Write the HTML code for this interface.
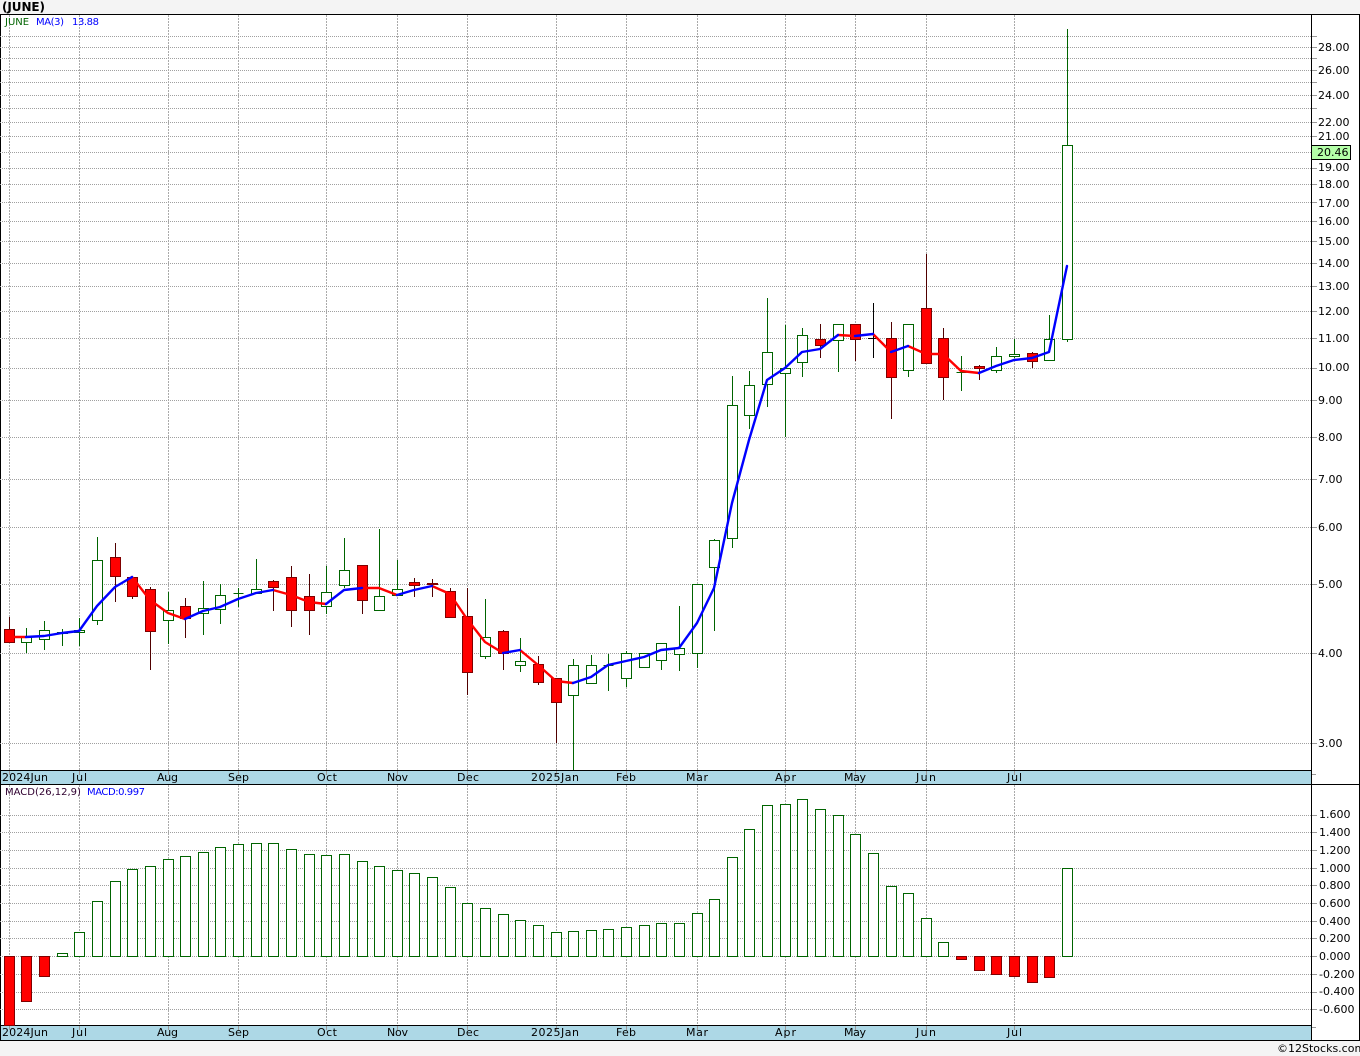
<!DOCTYPE html>
<html><head><meta charset="utf-8"><title>JUNE</title>
<style>
html,body{margin:0;padding:0;background:#f4f4f4;width:1360px;height:1056px;overflow:hidden}
svg{display:block}
text{font-family:"DejaVu Sans","Liberation Sans",sans-serif;font-size:11px;fill:#000}
.s{font-size:10px}
</style></head><body>
<svg width="1360" height="1056" viewBox="0 0 1360 1056" xmlns="http://www.w3.org/2000/svg">
<rect width="1360" height="1056" fill="#f4f4f4"/>
<rect x="0" y="14" width="1360" height="1026" fill="#fff"/>
<rect x="0" y="770" width="1311" height="14" fill="#add8e6"/>
<rect x="0" y="1025" width="1311" height="15" fill="#add8e6"/>
<g shape-rendering="crispEdges" fill="none">
<path stroke="#000" d="M0 14.5H1360M0.5 14V1040M1311.5 14V1040M1359.5 14V1040M0 770.5H1311M0 784.5H1360M0 1025.5H1311M0 1040.5H1360"/>
<g stroke="#a0a0a0" stroke-dasharray="1 1">
<path d="M0 36.5H1311M0 47.5H1311M0 58.5H1311M0 70.5H1311M0 82.5H1311M0 95.5H1311M0 108.5H1311M0 122.5H1311M0 136.5H1311M0 152.5H1311M0 168.5H1311M0 184.5H1311M0 202.5H1311M0 221.5H1311M0 241.5H1311M0 263.5H1311M0 286.5H1311M0 311.5H1311M0 338.5H1311M0 368.5H1311M0 400.5H1311M0 437.5H1311M0 479.5H1311M0 527.5H1311M0 584.5H1311M0 653.5H1311M0 743.5H1311"/>
<path d="M0 815.5H1311M0 832.5H1311M0 850.5H1311M0 868.5H1311M0 885.5H1311M0 903.5H1311M0 921.5H1311M0 938.5H1311M0 956.5H1311M0 974.5H1311M0 992.5H1311M0 1009.5H1311"/>
</g>
<g stroke="#aaaaaa" stroke-dasharray="2 1">
<path d="M9.5 15V770M79.5 15V770M168.5 15V770M238.5 15V770M326.5 15V770M397.5 15V770M467.5 15V770M556.5 15V770M626.5 15V770M697.5 15V770M785.5 15V770M855.5 15V770M926.5 15V770M1014.5 15V770"/>
<path d="M9.5 785V1025M79.5 785V1025M168.5 785V1025M238.5 785V1025M326.5 785V1025M397.5 785V1025M467.5 785V1025M556.5 785V1025M626.5 785V1025M697.5 785V1025M785.5 785V1025M855.5 785V1025M926.5 785V1025M1014.5 785V1025"/>
</g>
<path stroke="#999" d="M1312 36.5h5M1312 47.5h5M1312 58.5h5M1312 70.5h5M1312 82.5h5M1312 95.5h5M1312 108.5h5M1312 122.5h5M1312 136.5h5M1312 168.5h5M1312 184.5h5M1312 202.5h5M1312 221.5h5M1312 241.5h5M1312 263.5h5M1312 286.5h5M1312 311.5h5M1312 338.5h5M1312 368.5h5M1312 400.5h5M1312 437.5h5M1312 479.5h5M1312 527.5h5M1312 584.5h5M1312 653.5h5M1312 743.5h5M1312 774.5h4M1312 815.5h5M1312 832.5h5M1312 850.5h5M1312 868.5h5M1312 885.5h5M1312 903.5h5M1312 921.5h5M1312 938.5h5M1312 956.5h5M1312 974.5h5M1312 992.5h5M1312 1009.5h5M1312 1027.5h4M9.5 771v4M79.5 771v4M168.5 771v4M238.5 771v4M326.5 771v4M397.5 771v4M467.5 771v4M556.5 771v4M626.5 771v4M697.5 771v4M785.5 771v4M855.5 771v4M926.5 771v4M1014.5 771v4M9.5 1026v4M79.5 1026v4M168.5 1026v4M238.5 1026v4M326.5 1026v4M397.5 1026v4M467.5 1026v4M556.5 1026v4M626.5 1026v4M697.5 1026v4M785.5 1026v4M855.5 1026v4M926.5 1026v4M1014.5 1026v4"/>

<!-- green wicks -->
<path stroke="#006400" d="M26.5 628V653M44.5 621V650M62.5 629V646M79.5 618V646M97.5 537V625M168.5 592V644M203.5 581V635M220.5 584V624M238.5 588V607M256.5 559V593M326.5 566V614M344.5 538V588M379.5 529V596M397.5 560V589M485.5 599V659M520.5 638V672M573.5 659V770M591.5 655V665M608.5 654V691M626.5 651V687M644.5 653V667M661.5 643V670M679.5 606V671M697.5 584V668M714.5 539V631M732.5 376V548M749.5 371V429M767.5 298V407M785.5 325V437M802.5 328V377M838.5 324V372M908.5 324V377M961.5 356V391M996.5 347V373M1014.5 339V358M1049.5 315V360M1067.5 29V342"/>
<!-- red wicks -->
<path stroke="#500000" d="M9.5 617V642M115.5 543V602M132.5 577V599M150.5 587V670M185.5 598V638M273.5 580V611M291.5 566V627M309.5 574V635M362.5 565V614M414.5 578V597M432.5 579V597M450.5 588V617M467.5 588V695M503.5 630V670M538.5 656V685M556.5 678V743M820.5 324V358M855.5 324V361M891.5 322V419M926.5 254V364M943.5 328V400M979.5 365V380M1032.5 352V368"/>
<!-- doji black -->
<path stroke="#000" d="M873.5 303V358M868 338.5h10"/>
<!-- green bodies -->
<path stroke="#006400" fill="#fff" d="M21.500 637.500h10v5h-10zM39.500 630.500h10v9h-10zM57.500 632.500h10v1h-10zM74.500 630.500h10v2h-10zM92.500 560.500h10v60h-10zM163.500 610.500h10v10h-10zM198.500 608.500h10v5h-10zM215.500 595.500h10v14h-10zM233.500 593.500h10zM251.500 589.500h10v4h-10zM321.500 592.500h10v14h-10zM339.500 570.500h10v15h-10zM374.500 596.500h10v14h-10zM392.500 589.500h10v6h-10zM480.500 637.500h10v19h-10zM515.500 661.500h10v4h-10zM568.500 665.500h10v30h-10zM586.500 665.500h10v18h-10zM603.500 665.500h10zM621.500 653.500h10v25h-10zM639.500 653.500h10v14h-10zM656.500 643.500h10v17h-10zM674.500 648.500h10v6h-10zM692.500 584.500h10v69h-10zM709.500 540.500h10v27h-10zM727.500 405.500h10v133h-10zM744.500 385.500h10v30h-10zM762.500 352.500h10v32h-10zM780.500 368.500h10v5h-10zM797.500 335.500h10v27h-10zM833.500 324.500h10v16h-10zM903.500 324.500h10v46h-10zM956.500 372.500h10zM991.500 356.500h10v14h-10zM1009.500 354.500h10v2h-10zM1044.500 339.500h10v21h-10zM1062.500 145.500h10v194h-10z"/>
<!-- red bodies -->
<path stroke="#800000" fill="#f00" d="M4.500 629.500h10v13h-10zM110.500 557.500h10v19h-10zM127.500 577.500h10v19h-10zM145.500 589.500h10v42h-10zM180.500 606.500h10v12h-10zM268.500 581.500h10v6h-10zM286.500 577.500h10v33h-10zM304.500 596.500h10v14h-10zM357.500 565.500h10v35h-10zM409.500 582.500h10v3h-10zM427.500 583.500h10v1h-10zM445.500 591.500h10v26h-10zM462.500 616.500h10v56h-10zM498.500 631.500h10v22h-10zM533.500 664.500h10v18h-10zM551.500 678.500h10v24h-10zM815.500 339.500h10v6h-10zM850.500 324.500h10v15h-10zM886.500 338.500h10v39h-10zM921.500 308.500h10v55h-10zM938.500 338.500h10v39h-10zM974.500 366.500h10v2h-10zM1027.500 353.500h10v8h-10z"/>
<!-- MACD green bars -->
<path stroke="#006400" fill="#fff" d="M57.500 953.500h10v3h-10zM74.500 932.500h10v24h-10zM92.500 901.500h10v55h-10zM110.500 881.500h10v75h-10zM127.500 869.500h10v87h-10zM145.500 866.500h10v90h-10zM163.500 859.500h10v97h-10zM180.500 856.500h10v100h-10zM198.500 852.500h10v104h-10zM215.500 847.500h10v109h-10zM233.500 844.500h10v112h-10zM251.500 843.500h10v113h-10zM268.500 843.500h10v113h-10zM286.500 849.500h10v107h-10zM304.500 854.500h10v102h-10zM321.500 855.500h10v101h-10zM339.500 854.500h10v102h-10zM357.500 861.500h10v95h-10zM374.500 866.500h10v90h-10zM392.500 870.500h10v86h-10zM409.500 873.500h10v83h-10zM427.500 877.500h10v79h-10zM445.500 887.500h10v69h-10zM462.500 903.500h10v53h-10zM480.500 908.500h10v48h-10zM498.500 914.500h10v42h-10zM515.500 920.500h10v36h-10zM533.500 925.500h10v31h-10zM551.500 932.500h10v24h-10zM568.500 931.500h10v25h-10zM586.500 930.500h10v26h-10zM603.500 929.500h10v27h-10zM621.500 927.500h10v29h-10zM639.500 925.500h10v31h-10zM656.500 923.500h10v33h-10zM674.500 923.500h10v33h-10zM692.500 913.500h10v43h-10zM709.500 899.500h10v57h-10zM727.500 857.500h10v99h-10zM744.500 829.500h10v127h-10zM762.500 805.500h10v151h-10zM780.500 804.500h10v152h-10zM797.500 799.500h10v157h-10zM815.500 809.500h10v147h-10zM833.500 815.500h10v141h-10zM850.500 834.500h10v122h-10zM868.500 853.500h10v103h-10zM886.500 886.500h10v70h-10zM903.500 893.500h10v63h-10zM921.500 918.500h10v38h-10zM938.500 942.500h10v14h-10zM1062.500 868.500h10v88h-10z"/>
<!-- MACD red bars -->
<path stroke="#800000" fill="#f00" d="M4.500 956.500h10v69h-10zM21.500 956.500h10v45h-10zM39.500 956.500h10v20h-10zM956.500 956.500h10v3h-10zM974.500 956.500h10v14h-10zM991.500 956.500h10v18h-10zM1009.500 956.500h10v20h-10zM1027.500 956.500h10v26h-10zM1044.500 956.500h10v21h-10z"/>
<rect x="1311.500" y="145.500" width="39" height="14" fill="#b4ffa8" stroke="#000"/>
</g>
<!-- MA line -->
<g fill="none" stroke-width="2.4" stroke-linejoin="round" stroke-linecap="round">
<g stroke="#ff0000">
<polyline points="9,637 26,637"/>
<polyline points="132,577 150,600 168,613 185,619"/>
<polyline points="273,590 291,595 309,602 326,604"/>
<polyline points="362,588 379,588 397,595"/>
<polyline points="432,586 450,594 467,619 485,642 503,653"/>
<polyline points="520,650 538,665 556,681 573,683"/>
<polyline points="838,335 855,336"/>
<polyline points="873,334 891,352"/>
<polyline points="908,346 926,354 943,354 961,371 979,373"/>
</g>
<g stroke="#0000ff">
<polyline points="26,637 44,636 62,633 79,631 97,606 115,587 132,577"/>
<polyline points="185,619 203,611 220,607 238,599 256,593 273,590"/>
<polyline points="326,604 344,590 362,588"/>
<polyline points="397,595 414,590 432,586"/>
<polyline points="503,653 520,650"/>
<polyline points="573,683 591,677 608,665 626,661 644,657 661,650 679,648 697,623 714,588 732,503 749,440 767,380 785,368 802,352 820,349 838,335"/>
<polyline points="855,336 873,334"/>
<polyline points="891,352 908,346"/>
<polyline points="979,373 996,366 1014,360 1032,358 1049,352 1067,266"/>
</g>
</g>
<!-- Text -->
<text x="2" y="11" textLength="43" style="font-weight:bold;font-size:12px">(JUNE)</text>
<text class="s" x="5" y="25" style="fill:#006400">JUNE</text>
<text class="s" x="36" y="25" textLength="28" style="fill:#0000ff">MA(3)</text>
<text class="s" x="72" y="25" textLength="27" style="fill:#0000ff">13.88</text>
<text class="s" x="5" y="795" style="fill:#300030">MACD(26,12,9)</text>
<text class="s" x="87" y="795" textLength="58" style="fill:#0000ff">MACD:0.997</text>
<g>
<text x="1318" y="51">28.00</text><text x="1318" y="74">26.00</text><text x="1318" y="99">24.00</text><text x="1318" y="126">22.00</text><text x="1318" y="140">21.00</text><text x="1317" y="156">20.46</text><text x="1318" y="171">19.00</text><text x="1318" y="188">18.00</text><text x="1318" y="207">17.00</text><text x="1318" y="225">16.00</text><text x="1318" y="245">15.00</text><text x="1318" y="267">14.00</text><text x="1318" y="290">13.00</text><text x="1318" y="315">12.00</text><text x="1318" y="342">11.00</text><text x="1318" y="371">10.00</text><text x="1318" y="404">9.00</text><text x="1318" y="441">8.00</text><text x="1318" y="483">7.00</text><text x="1318" y="531">6.00</text><text x="1318" y="588">5.00</text><text x="1318" y="657">4.00</text><text x="1318" y="747">3.00</text>
<text x="1319" y="818">1.600</text><text x="1319" y="836">1.400</text><text x="1319" y="854">1.200</text><text x="1319" y="872">1.000</text><text x="1319" y="889">0.800</text><text x="1319" y="907">0.600</text><text x="1319" y="925">0.400</text><text x="1319" y="942">0.200</text><text x="1319" y="960">0.000</text><text x="1319" y="978">-0.200</text><text x="1319" y="995">-0.400</text><text x="1319" y="1013">-0.600</text>
</g>
<g>
<text x="2" y="781" textLength="46">2024Jun</text><text x="72" y="781" textLength="15">Jul</text><text x="157" y="781" textLength="21">Aug</text><text x="228" y="781" textLength="21">Sep</text><text x="317" y="781" textLength="20">Oct</text><text x="387" y="781" textLength="21">Nov</text><text x="457" y="781" textLength="22">Dec</text><text x="531" y="781" textLength="48">2025Jan</text><text x="616" y="781" textLength="20">Feb</text><text x="686" y="781" textLength="22">Mar</text><text x="775" y="781" textLength="21">Apr</text><text x="844" y="781" textLength="22">May</text><text x="916" y="781" textLength="20">Jun</text><text x="1007" y="781" textLength="15">Jul</text>
<text x="2" y="1036" textLength="46">2024Jun</text><text x="72" y="1036" textLength="15">Jul</text><text x="157" y="1036" textLength="21">Aug</text><text x="228" y="1036" textLength="21">Sep</text><text x="317" y="1036" textLength="20">Oct</text><text x="387" y="1036" textLength="21">Nov</text><text x="457" y="1036" textLength="22">Dec</text><text x="531" y="1036" textLength="48">2025Jan</text><text x="616" y="1036" textLength="20">Feb</text><text x="686" y="1036" textLength="22">Mar</text><text x="775" y="1036" textLength="21">Apr</text><text x="844" y="1036" textLength="22">May</text><text x="916" y="1036" textLength="20">Jun</text><text x="1007" y="1036" textLength="15">Jul</text>
</g>
<text x="1277" y="1052">©12Stocks.com</text>
</svg>
</body></html>
